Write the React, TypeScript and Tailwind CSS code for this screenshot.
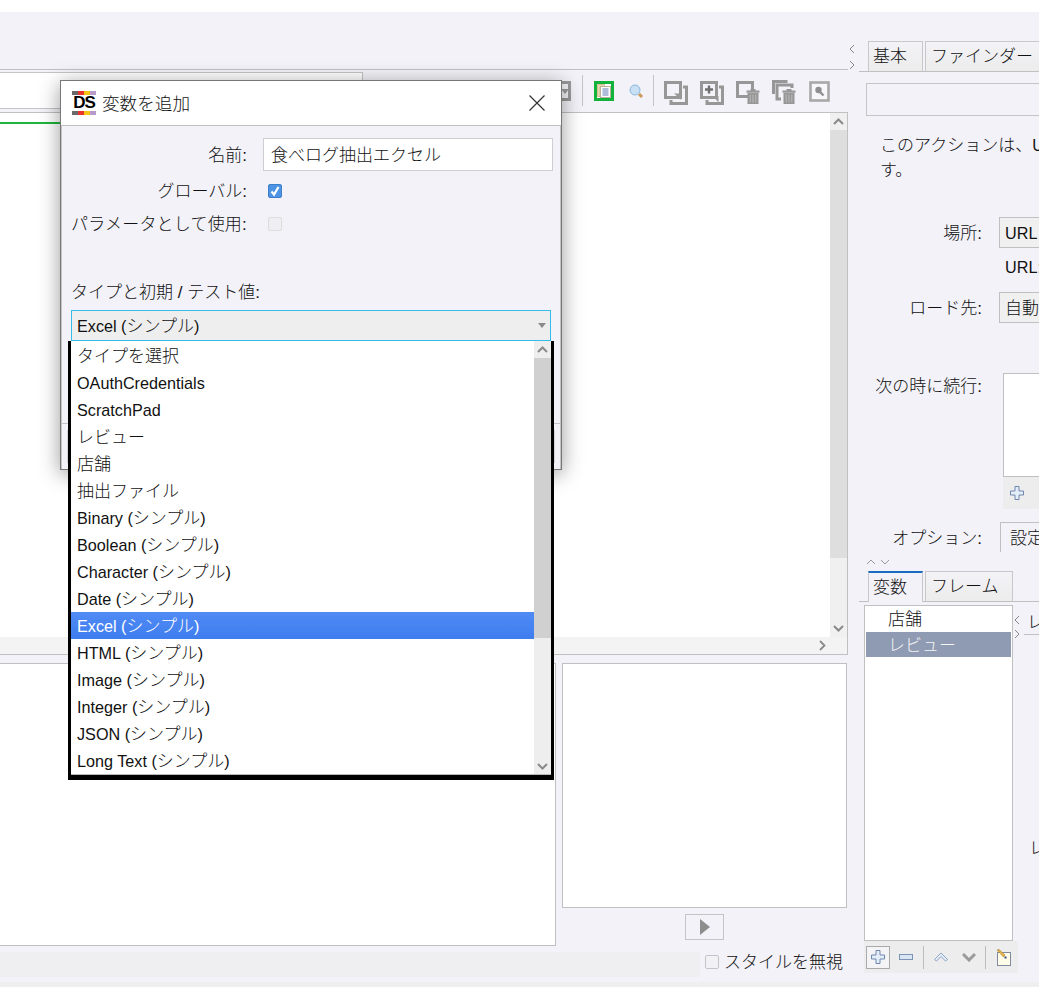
import type { ReactNode } from "react"

const gray = "#979797"

function Chev({ up, className = "" }: { up?: boolean; className?: string }) {
  return (
    <svg width="11" height="7" viewBox="0 0 11 7" className={className}>
      <path d={up ? "M1 6 L5.5 1.5 L10 6" : "M1 1 L5.5 5.5 L10 1"} fill="none" stroke="#8a8a8a" strokeWidth="2" />
    </svg>
  )
}

function TinyArrows({ vertical, gap = 16 }: { vertical?: boolean; gap?: number }) {
  if (vertical) {
    return (
      <svg width="24" height="8" viewBox="0 0 24 8">
        <path d="M1 6 L5 2 L9 6 M15 2 L19 6 L23 2" fill="none" stroke="#999" strokeWidth="1" />
      </svg>
    )
  }
  return (
    <svg width="8" height={gap + 10} viewBox={`0 0 8 ${gap + 10}`}>
      <path d={`M6 1 L2 5 L6 9 M2 ${gap + 1} L6 ${gap + 5} L2 ${gap + 9}`} fill="none" stroke="#888" strokeWidth="1" />
    </svg>
  )
}

function Trash({ x, y }: { x: number; y: number }) {
  return (
    <g transform={`translate(${x} ${y})`} fill={gray}>
      <rect x="0" y="1.5" width="13" height="2.2" />
      <rect x="4" y="0" width="5" height="2" />
      <path d="M1 4h11v11H1z" />
      <path d="M3.7 5.5v8M6.5 5.5v8M9.3 5.5v8" stroke="#c4c4c4" strokeWidth="0.8" />
    </g>
  )
}

function ToolIcon({ kind }: { kind: "copy" | "plus" | "trash" | "trash2" | "find" }) {
  const s = { fill: "none", stroke: gray, strokeWidth: 3 }
  return (
    <svg width="24" height="24" viewBox="0 0 24 24" className="block">
      {kind === "copy" && (
        <>
          <rect x="1.5" y="1.5" width="15" height="15" {...s} />
          <path d="M19 6h3.5v16.5H7V19" {...s} />
          <path d="M10 12.5h6.5v6.5l-2.5-3z" fill={gray} />
        </>
      )}
      {kind === "plus" && (
        <>
          <rect x="1.5" y="1.5" width="15" height="15" {...s} />
          <path d="M19 6h3.5v16.5H7V19" {...s} />
          <path d="M5 8.5h8M9 4.5v8" stroke="#6f6f6f" strokeWidth="2.4" />
          <path d="M12 15h6.5v6.5l-2.5-3z" fill={gray} />
        </>
      )}
      {kind === "trash" && (
        <>
          <path d="M12 15.5H1.5V1.5h15V8" {...s} />
          <Trash x={10.5} y={8} />
        </>
      )}
      {kind === "trash2" && (
        <>
          <path d="M1.5 14V1.5h14" {...s} />
          <path d="M9 19H5V5h15v3" {...s} />
          <Trash x={10.5} y={9} />
        </>
      )}
      {kind === "find" && (
        <>
          <rect x="1.5" y="2.5" width="18" height="18" fill="#f7f7fa" stroke="#a8a8a8" strokeWidth="2.6" />
          <circle cx="9.5" cy="10" r="3.2" fill="#8f8f8f" />
          <path d="M11 12l3.5 3.5" stroke="#8f8f8f" strokeWidth="2.4" />
        </>
      )}
    </svg>
  )
}

function DsLogo() {
  const stripe = (
    <div className="flex h-[4px] w-[24px]">
      <div className="w-[6px] bg-[#6a6a6a]" />
      <div className="w-[6px] bg-[#e8352b]" />
      <div className="w-[6px] bg-[#f5c518]" />
      <div className="w-[6px] bg-[#b79ccb]" />
    </div>
  )
  return (
    <div className="flex w-[24px] flex-col">
      {stripe}
      <div className="flex h-[16px] items-center justify-center text-[17px] leading-none font-bold tracking-[-1px] text-black">DS</div>
      {stripe}
    </div>
  )
}

function Jp({ children }: { children: ReactNode }) {
  return <span className="text-[17px]">{children}</span>
}

function Box({ checked, disabled }: { checked?: boolean; disabled?: boolean }) {
  if (checked) {
    return (
      <div className="flex h-[14px] w-[14px] items-center justify-center rounded-[2px] border border-[#3d7fc9] bg-[#4d94e4]">
        <svg width="12" height="12" viewBox="0 0 12 12">
          <path d="M2.5 6.5 L5 9.5 L9.5 2" fill="none" stroke="#fff" strokeWidth="2.2" />
        </svg>
      </div>
    )
  }
  return <div className={`h-[14px] w-[14px] rounded-[2px] border ${disabled ? "border-[#dcdcdc] bg-[#efeff3]" : "border-[#c4c4c4] bg-[#f2f2f6]"}`} />
}

function PlusBlue() {
  return (
    <svg width="16" height="16" viewBox="0 0 16 16">
      <path d="M6 1.5h4v4.5h4.5v4H10v4.5H6V10H1.5V6H6z" fill="#e3eef8" stroke="#6f86ad" strokeWidth="1" />
    </svg>
  )
}

const options: [string, string?][] = [
  ["", "タイプを選択"],
  ["OAuthCredentials"],
  ["ScratchPad"],
  ["", "レビュー"],
  ["", "店舗"],
  ["", "抽出ファイル"],
  ["Binary (", "シンプル"],
  ["Boolean (", "シンプル"],
  ["Character (", "シンプル"],
  ["Date (", "シンプル"],
  ["Excel (", "シンプル"],
  ["HTML (", "シンプル"],
  ["Image (", "シンプル"],
  ["Integer (", "シンプル"],
  ["JSON (", "シンプル"],
  ["Long Text (", "シンプル"],
]

function Dialog() {
  return (
    <div className="absolute top-[80px] left-[60px] flex h-[390px] w-[502px] flex-col border border-[#777] bg-[#f2f2f8] shadow-[0_4px_20px_rgba(0,0,0,0.4)]">
      <div className="flex h-[45px] shrink-0 items-center justify-between border-b border-[#c0c0c0] bg-white pr-[16px] pl-[11px]">
        <div className="flex items-center gap-[6px]">
          <DsLogo />
          <span className="pt-[2px] text-[17.6px]">変数を追加</span>
        </div>
        <svg width="16" height="16" viewBox="0 0 16 16">
          <path d="M0.5 0.5 L15.5 15.5 M15.5 0.5 L0.5 15.5" stroke="#333" strokeWidth="1.2" />
        </svg>
      </div>
      <div className="flex flex-1 flex-col border-x border-[#c4c4c4] pt-[12px]">
        <div className="flex items-center">
          <div className="w-[185px] pt-[2px] text-right text-[17px]">名前:</div>
          <div className="ml-[16px] flex h-[33px] w-[290px] items-center border border-[#cfcfcf] bg-white pt-[2px] pl-[7px] text-[17px]">食べログ抽出エクセル</div>
        </div>
        <div className="mt-[13px] flex h-[14px] items-center">
          <div className="w-[185px] pt-[2px] text-right text-[17px]">グローバル:</div>
          <div className="ml-[21px]"><Box checked /></div>
        </div>
        <div className="mt-[19px] flex h-[14px] items-center">
          <div className="w-[185px] pt-[2px] text-right text-[17px] tracking-[0.2px] whitespace-nowrap">パラメータとして使用:</div>
          <div className="ml-[21px]"><Box disabled /></div>
        </div>
        <div className="mt-[52px] mb-[-1px] ml-[9px] h-[20px] text-[17px] leading-[20px]">タイプと初期 / テスト値:</div>
        <div className="relative mt-[8px] ml-[9px] flex h-[31px] w-[480px] items-center justify-between border border-[#35bdea] bg-[#eeeeee] pr-[4px] pl-[5px]">
          <div className="pt-[2px]">Excel (<Jp>シンプル</Jp>)</div>
          <div className="h-0 w-0 border-x-[4px] border-t-[5px] border-x-transparent border-t-[#8a8a8a]" />
          <div className="absolute top-[30px] left-[-4px] z-10 flex h-[439px] w-[486px] border-x-[3px] border-b-[5px] border-black bg-white">
            <div className="flex flex-1 flex-col border-b border-[#b8b8b8]">
              <div className="flex-1 pt-[1px]">
                {options.map(([latin, jp]) => {
                  const active = latin === "Excel ("
                  return (
                    <div key={latin + jp} className={`flex h-[27px] items-center pt-[2px] pl-[6px] whitespace-pre ${active ? "bg-gradient-to-b from-[#508bf5] to-[#3f7def] text-white" : ""}`}>
                      {latin}
                      {jp && <Jp>{jp}</Jp>}
                      {latin.endsWith("(") && ")"}
                    </div>
                  )
                })}
              </div>
            </div>
            <div className="flex w-[17px] flex-col border-b border-[#b8b8b8] bg-[#eeeeee]">
              <div className="flex h-[17px] items-center justify-center"><Chev up /></div>
              <div className="h-[280px] bg-[#d0d0d0]" />
              <div className="flex flex-1 items-end justify-center pb-[4px]"><Chev /></div>
            </div>
          </div>
        </div>
        <div className="mt-[82px] flex-1 border-t border-[#c4c4c4] pt-[6px] pl-[5px]">
          <div className="h-[33px] w-[488px] border border-[#d4d4d4] bg-[#f0f0f4]" />
        </div>
      </div>
    </div>
  )
}

function Toolbar() {
  return (
    <div className="flex h-[43px] border-t border-[#c0c0c0]">
      <div className="mt-[2px] h-[37px] w-[363px] border-y border-r border-[#c4c4c4] bg-white" />
      <div className="mt-[11px] ml-[188px] flex h-[20px] w-[20px] items-center justify-center border-[3px] border-[#999]">
        <div className="ml-[8px] h-0 w-0 border-x-[4px] border-t-[5px] border-x-transparent border-t-[#999]" />
      </div>
      <div className="mt-[5px] ml-[11px] h-[31px] w-px bg-[#c4c4c4]" />
      <div className="mt-[11px] ml-[11px] flex h-[20px] w-[20px] items-center justify-center border-[3px] border-[#12b33c] bg-white">
        <svg width="14" height="14" viewBox="0 0 14 14">
          <path d="M0.5 0.5h7v2H3v10H0.5z" fill="#e8dcb8" stroke="#c5ad6e" strokeWidth="0.7" />
          <rect x="3.5" y="2.5" width="10" height="11" fill="#fff" stroke="#b9b19a" />
          <path d="M5.5 5h6M5.5 7h6M5.5 9h6M5.5 11h6" stroke="#5f7db5" strokeWidth="1" />
        </svg>
      </div>
      <svg width="15" height="15" viewBox="0 0 15 15" className="mt-[14px] ml-[15px]">
        <circle cx="6" cy="6" r="5" fill="#c9e0f4" stroke="#8cb6dc" />
        <path d="M10 10l3 3" stroke="#c9985a" strokeWidth="3" />
      </svg>
      <div className="mt-[5px] ml-[9px] h-[31px] w-px bg-[#c4c4c4]" />
      <div className="mt-[11px] ml-[10px]"><ToolIcon kind="copy" /></div>
      <div className="mt-[11px] ml-[12px]"><ToolIcon kind="plus" /></div>
      <div className="mt-[11px] ml-[12px]"><ToolIcon kind="trash" /></div>
      <div className="mt-[10px] ml-[12px]"><ToolIcon kind="trash2" /></div>
      <div className="mt-[10px] ml-[13px]"><ToolIcon kind="find" /></div>
    </div>
  )
}

function LeftColumn() {
  return (
    <div className="flex w-[848px] shrink-0 flex-col">
      <div className="h-[57px]" />
      <Toolbar />
      <div className="flex h-[525px] border-t border-r border-[#c0c0c0] bg-white">
        <div className="flex-1">
          <div className="mt-[9px] h-[2px] w-[70px] bg-[#1eb53a]" />
        </div>
        <div className="flex w-[17px] flex-col bg-[#f0f0f0]">
          <div className="flex h-[17px] items-center justify-center"><Chev up /></div>
          <div className="h-[428px] bg-[#dedede]" />
          <div className="flex flex-1 items-end justify-center pb-[5px]"><Chev /></div>
        </div>
      </div>
      <div className="flex h-[18px] items-center justify-end border-r border-b border-[#c0c0c0] bg-[#f3f3f3] pr-[21px]">
        <svg width="7" height="11" viewBox="0 0 7 11">
          <path d="M1 1 L5.5 5.5 L1 10" fill="none" stroke="#8a8a8a" strokeWidth="1.8" />
        </svg>
      </div>
      <div className="mt-[8px] flex">
        <div className="h-[283px] w-[556px] border-y border-r border-[#c0c0c0] bg-white" />
        <div className="ml-[6px] flex w-[285px] flex-col items-start">
          <div className="h-[245px] w-[285px] border border-[#c0c0c0] bg-white" />
          <div className="mt-[6px] ml-[123px] flex h-[26px] w-[39px] items-center justify-center border border-[#c4c4c4]">
            <div className="h-0 w-0 border-y-[8px] border-l-[10px] border-y-transparent border-l-[#8d8d8d]" />
          </div>
        </div>
      </div>
      <div className="mt-[6px] flex h-[25px] items-center">
        <div className="h-full w-[700px] bg-[#efeff1]" />
        <div className="mb-[6px] ml-[5px]"><Box /></div>
        <div className="mb-[3px] ml-[5px] text-[17px] whitespace-nowrap">スタイルを無視</div>
      </div>
    </div>
  )
}

function Tab({ label, w, active, pad = "pl-[5px]" }: { label: string; w: string; active?: boolean; pad?: string }) {
  return (
    <div className={`${w} ${pad} ${active ? "mb-[-1px] h-[31px] border-t-2 border-t-[#1a6bbf] bg-[#f2f2f8]" : "h-[30px] border-t border-t-[#c8c8c8] bg-gradient-to-b from-[#f3f3f7] to-[#ececec]"} flex shrink-0 items-center border-x border-[#c8c8c8] text-[17px] whitespace-nowrap`}>
      {label}
    </div>
  )
}

function FormSelect({ children, label }: { children: ReactNode; label: string }) {
  return (
    <div className="flex h-[31px] items-center">
      <div className="w-[134px] shrink-0 pt-[3px] text-right text-[17px] whitespace-nowrap">{label}</div>
      <div className="ml-[17px] flex h-full flex-1 items-center border-y border-l border-[#c0c0c0] bg-[#f0f0f0] pt-[2px] pl-[5px] whitespace-nowrap">
        {children}
      </div>
    </div>
  )
}

function ListToolbar() {
  return (
    <div className="flex h-[32px] w-[154px] shrink-0 items-center bg-[#ededed] pl-[2px]">
      <div className="flex h-[23px] w-[24px] items-center justify-center border border-[#aaa] bg-[#f4f4f6]"><PlusBlue /></div>
      <svg width="16" height="8" viewBox="0 0 16 8" className="ml-[8px]">
        <rect x="1.5" y="1.5" width="13" height="5" fill="#d8e6f4" stroke="#7d93b8" />
      </svg>
      <div className="ml-[9px] h-[23px] w-px bg-[#bcbcbc]" />
      <svg width="14" height="10" viewBox="0 0 14 10" className="ml-[10px]">
        <path d="M0.5 7.5 L7 1 L13.5 7.5 L11.5 9 L7 4.5 L2.5 9 z" fill="#e6eef8" stroke="#8ea4c6" strokeWidth="1" />
      </svg>
      <svg width="14" height="10" viewBox="0 0 14 10" className="ml-[14px]">
        <path d="M1 2 L7 8 L13 2" fill="none" stroke="#9a9a9a" strokeWidth="3" />
      </svg>
      <div className="ml-[9px] h-[23px] w-px bg-[#bcbcbc]" />
      <svg width="15" height="17" viewBox="0 0 15 17" className="ml-[10px]">
        <rect x="1.5" y="3.5" width="13" height="13" fill="#fffde8" stroke="#7f8a9e" />
        <path d="M1 1 L3 0.5 L9 6 L7.5 8 z" fill="#e6b64e" stroke="#a77c28" strokeWidth="0.6" />
        <rect x="8.5" y="7.5" width="2" height="2" fill="#2f4a7a" />
      </svg>
    </div>
  )
}

function RightColumn() {
  return (
    <div className="flex min-w-0 flex-1 flex-col">
      <div className="mt-[29px] flex h-[31px]">
        <div className="flex w-[11px] shrink-0 items-center justify-start"><TinyArrows /></div>
        <div className="flex flex-1 items-start gap-[2px] border-b border-[#c0c0c0] pl-[9px]">
          <Tab label="基本" w="w-[55px]" pad="pl-[4px]" />
          <Tab label="ファインダー" w="w-[140px]" />
        </div>
      </div>
      <div className="mt-[11px] ml-[18px] h-[33px] w-[200px] shrink-0 border border-[#c4c4c4]" />
      <div className="mt-[17px] ml-[32px] w-[220px] text-[17px] leading-[25px] whitespace-nowrap">
        このアクションは、<span className="text-[16px]">U</span>
        <br />
        す。
      </div>
      <div className="mt-[34px]">
        <FormSelect label="場所:">URL</FormSelect>
      </div>
      <div className="mt-[9px] h-[20px] pl-[157px] leading-[20px] whitespace-nowrap">URL:</div>
      <div className="mt-[15px]">
        <FormSelect label="ロード先:"><Jp>自動</Jp></FormSelect>
      </div>
      <div className="mt-[50px] flex items-start">
        <div className="mt-[1px] w-[134px] shrink-0 text-right text-[17px] whitespace-nowrap">次の時に続行:</div>
        <div className="ml-[21px] flex-1">
          <div className="h-[104px] border-y border-l border-[#c0c0c0] bg-white" />
          <div className="flex h-[32px] items-center bg-[#ededed] pl-[6px]"><PlusBlue /></div>
        </div>
      </div>
      <div className="mt-[13px] flex h-[30px] items-center">
        <div className="w-[134px] shrink-0 pt-[3px] text-right text-[17px] whitespace-nowrap">オプション:</div>
        <div className="ml-[18px] flex h-full flex-1 items-center border-t border-l border-[#c0c0c0] pt-[2px] pl-[9px] text-[17px] whitespace-nowrap">設定</div>
      </div>
      <div className="flex h-[19px] items-center pl-[18px]"><TinyArrows vertical /></div>
      <div className="ml-[11px] flex h-[31px] items-start gap-[2px] border-b border-[#c0c0c0] pl-[9px]">
        <Tab label="変数" w="w-[55px]" active pad="pl-[4px]" />
        <Tab label="フレーム" w="w-[88px]" />
      </div>
      <div className="mt-[3px] flex pl-[16px]">
        <div className="flex w-[149px] shrink-0 flex-col">
          <div className="h-[336px] w-[149px] border border-[#c0c0c0] bg-white">
            <div className="flex h-[26px] items-center pt-[2px] pl-[23px] text-[17px]">店舗</div>
            <div className="mx-px flex h-[25px] items-center bg-[#8f9bb3] pt-[2px] pl-[22px] text-[17px] text-[#f4f4f4]">レビュー</div>
          </div>
          <ListToolbar />
        </div>
        <div className="flex min-w-0 flex-1 items-start pt-[3px]">
          <div className="mt-[7px] ml-[-1px] flex w-[12px] shrink-0 justify-start pl-[1px]"><TinyArrows gap={14} /></div>
          <div className="min-w-0 flex-1">
            <div className="h-[27px] border-b border-[#c0c0c0] pt-[2px] pl-[3px] text-[17px] whitespace-nowrap">レ</div>
            <div className="mt-[201px] pl-[5px] text-[17px] whitespace-nowrap">レ</div>
          </div>
        </div>
      </div>
    </div>
  )
}

export default function App() {
  return (
    <div className="relative flex h-[987px] w-[1039px] flex-col overflow-hidden bg-white font-['Liberation_Sans','Noto_Sans_CJK_JP',sans-serif] text-[16.2px] font-light text-[#111]">
      <div className="h-[12px] shrink-0 bg-white" />
      <div className="flex flex-1 bg-[#f2f2f8]">
        <LeftColumn />
        <RightColumn />
      </div>
      <div className="h-[5px] shrink-0 bg-[#efefef]" />
      <Dialog />
    </div>
  )
}
